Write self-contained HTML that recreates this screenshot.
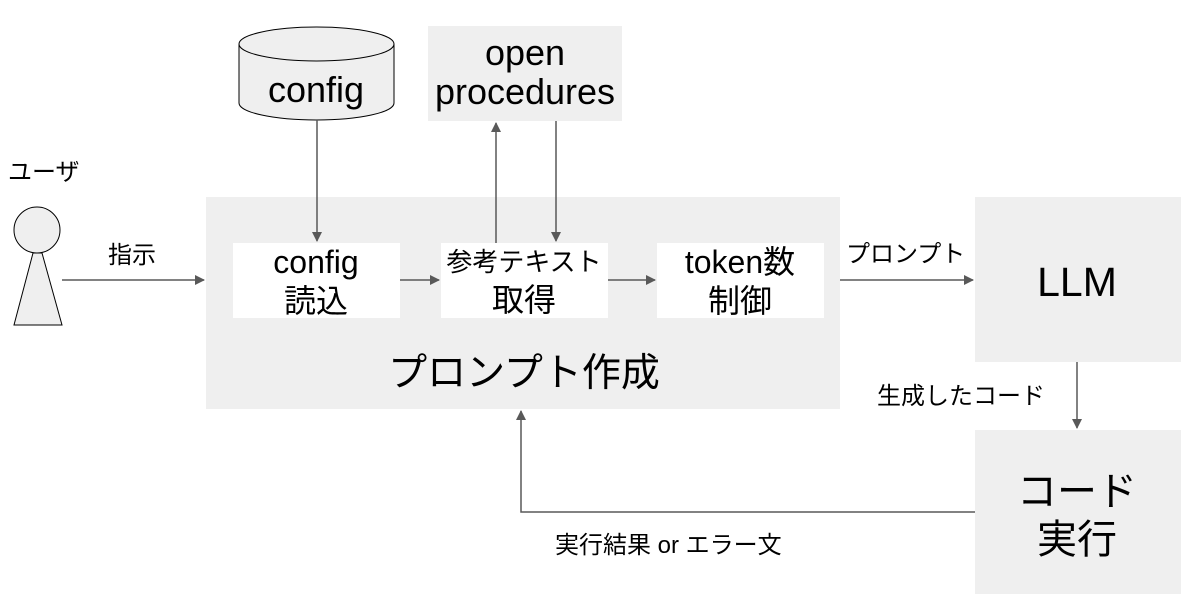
<!DOCTYPE html>
<html><head><meta charset="utf-8"><style>
html,body{margin:0;padding:0;background:#fff;}
svg{display:block;}
text{font-family:"Liberation Sans","Noto Sans CJK JP",sans-serif;fill:#000;}
</style></head><body>
<svg width="1200" height="610" viewBox="0 0 1200 610" xmlns="http://www.w3.org/2000/svg">
<defs><marker id="a" markerWidth="10" markerHeight="10" refX="9" refY="5" orient="auto" markerUnits="userSpaceOnUse"><path d="M0,0 L10,5 L0,10 z" fill="#595959"/></marker></defs>
<rect x="206" y="197" width="634" height="212" fill="#efefef"/>
<rect x="233" y="243" width="167" height="75" fill="#fff"/>
<rect x="441" y="243" width="167" height="75" fill="#fff"/>
<rect x="657" y="243" width="167" height="75" fill="#fff"/>
<rect x="975" y="197" width="206" height="165" fill="#efefef"/>
<rect x="975" y="430" width="206" height="164" fill="#efefef"/>
<rect x="428" y="26" width="194" height="95" fill="#efefef"/>
<path d="M239,44 L239,103 A77.5,17 0 0 0 394,103 L394,44 A77.5,17 0 0 0 239,44 Z" fill="#efefef" stroke="#000" stroke-width="1"/>
<path d="M239,44 A77.5,17 0 0 0 394,44" fill="none" stroke="#000" stroke-width="1"/>
<circle cx="37" cy="230" r="23" fill="#efefef" stroke="#000"/>
<path d="M33,253 L14,325 L62,325 L42,253 Z" fill="#efefef" stroke="#000"/>
<g stroke="#595959" stroke-width="1.5" fill="none">
<line x1="62" y1="280" x2="204" y2="280" marker-end="url(#a)"/>
<line x1="400" y1="280" x2="439" y2="280" marker-end="url(#a)"/>
<line x1="608" y1="280" x2="655" y2="280" marker-end="url(#a)"/>
<line x1="840" y1="280" x2="973" y2="280" marker-end="url(#a)"/>
<line x1="317" y1="120" x2="317" y2="241" marker-end="url(#a)"/>
<line x1="496" y1="243" x2="496" y2="123" marker-end="url(#a)"/>
<line x1="556" y1="121" x2="556" y2="241" marker-end="url(#a)"/>
<line x1="1077" y1="362" x2="1077" y2="428" marker-end="url(#a)"/>
<polyline points="975,512 521,512 521,411" marker-end="url(#a)"/>
</g>
<g text-anchor="middle">
<text x="316" y="102" font-size="36">config</text>
<text x="525" y="65" font-size="36">open</text>
<text x="525" y="104" font-size="36">procedures</text>
<text x="316" y="273" font-size="32">config</text>
<text x="316" y="312" font-size="32">読込</text>
<text x="524" y="271" font-size="26">参考テキスト</text>
<text x="524" y="311" font-size="32">取得</text>
<text x="740" y="273" font-size="32">token数</text>
<text x="740" y="312" font-size="32">制御</text>
<text x="524" y="386" font-size="39">プロンプト作成</text>
<text x="1077" y="296" font-size="41">LLM</text>
<text x="1077" y="505" font-size="40">コード</text>
<text x="1077" y="553" font-size="40">実行</text>
</g>
<text x="8" y="180" font-size="24">ユーザ</text>
<text x="108" y="263" font-size="24">指示</text>
<text x="846" y="262" font-size="24">プロンプト</text>
<text x="877" y="404" font-size="24">生成したコード</text>
<text x="555" y="553" font-size="24">実行結果 or エラー文</text>
</svg>
</body></html>
